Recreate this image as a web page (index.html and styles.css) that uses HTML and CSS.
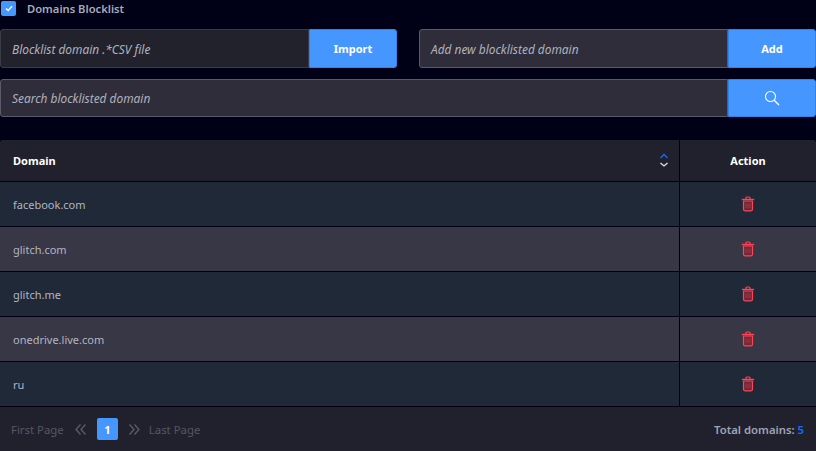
FILE: index.html
```html
<!DOCTYPE html>
<html lang="en">
<head>
<meta charset="utf-8">
<title>Domains Blocklist</title>
<link rel="stylesheet" href="styles.css">
</head>
<body>
<div class="page">
  <label class="title">
    <span class="check"><svg width="8" height="7" viewBox="0 0 8 7"><path d="M1 3.500 3.200 5.600 7 1.200" fill="none" stroke="#fff" stroke-width="1.400"/></svg></span>
    <span>Domains Blocklist</span>
  </label>
  <div class="row two">
    <div class="group">
      <div class="field dim">Blocklist domain .*CSV file</div>
      <button class="btn">Import</button>
    </div>
    <div class="group">
      <div class="field">Add new blocklisted domain</div>
      <button class="btn">Add</button>
    </div>
  </div>
  <div class="group search">
    <div class="field">Search blocklisted domain</div>
    <button class="btn">
      <svg width="16" height="16" viewBox="0 0 16 16" fill="none" stroke="#fff" stroke-width="1.100"><circle cx="6.500" cy="6.500" r="5"/><path d="M10.200 10.200 15 15" stroke-width="1.300"/></svg>
    </button>
  </div>
  <div class="table">
    <div class="thead">
      <div class="c-domain">Domain
        <svg class="sort" width="10" height="15" viewBox="0 0 10 15" fill="none" stroke-width="1.300"><path d="M1.500 5 5 1.500 8.500 5" stroke="#0d6efd"/><path d="M1.500 10 5 13 8.500 10" stroke="#e4e4e8"/></svg>
      </div>
      <div class="c-action">Action</div>
    </div>
    <div class="tr a"><div class="c-domain">facebook.com</div><div class="c-action"><svg class="trash" width="14" height="16" viewBox="0 0 14 16"><use href="#trash"/></svg></div></div>
    <div class="tr b"><div class="c-domain">glitch.com</div><div class="c-action"><svg class="trash" width="14" height="16" viewBox="0 0 14 16"><use href="#trash"/></svg></div></div>
    <div class="tr a"><div class="c-domain">glitch.me</div><div class="c-action"><svg class="trash" width="14" height="16" viewBox="0 0 14 16"><use href="#trash"/></svg></div></div>
    <div class="tr b"><div class="c-domain">onedrive.live.com</div><div class="c-action"><svg class="trash" width="14" height="16" viewBox="0 0 14 16"><use href="#trash"/></svg></div></div>
    <div class="tr a"><div class="c-domain">ru</div><div class="c-action"><svg class="trash" width="14" height="16" viewBox="0 0 14 16"><use href="#trash"/></svg></div></div>
    <div class="tfoot">
      <div class="pager">
        <span>First Page</span>
        <svg class="prev" width="12" height="11" viewBox="0 0 12 11" fill="none" stroke="#5a5c69" stroke-width="1.300"><path d="M5.500 .5 1 5.500 5.500 10.500M10.500 .5 6 5.500 10.500 10.500"/></svg>
        <span class="current">1</span>
        <svg class="next" width="12" height="11" viewBox="0 0 12 11" fill="none" stroke="#5a5c69" stroke-width="1.300"><path d="M1.500 .5 6 5.500 1.500 10.500M6.500 .5 11 5.500 6.500 10.500"/></svg>
        <span>Last Page</span>
      </div>
      <div class="total">Total domains: <b>5</b></div>
    </div>
  </div>
</div>
<svg class="defs" width="0" height="0" aria-hidden="true">
  <symbol id="trash" viewBox="0 0 14 16">
    <path d="M2.500 5h9v8.300a1.500 1.500 0 0 1-1.500 1.500H4a1.500 1.500 0 0 1-1.500-1.500z" fill="#6e2a3a" stroke="#ff4354" stroke-width="1.200"/>
    <path d="M.8 3.500h12.400" fill="none" stroke="#ff4354" stroke-width="1.400"/>
    <path d="M5 3.200V2a1 1 0 0 1 1-1h2a1 1 0 0 1 1 1v1.200" fill="none" stroke="#ff4354" stroke-width="1.200"/>
    <path d="M5 7.500v4.500M7 7.500v4.500M9 7.500v4.500" fill="none" stroke="#b03242" stroke-width=".9"/>
  </symbol>
</svg>
</body>
</html>
```

FILE: styles.css
```css
* { box-sizing: border-box; }
html, body { margin: 0; padding: 0; }
body {
  width: 816px;
  height: 451px;
  overflow: hidden;
  background: #000016;
  font-family: "Noto Sans", "Open Sans", sans-serif;
  font-size: 11px;
  color: #a9acba;
}
.page { display: flex; flex-direction: column; }
.title {
  display: flex;
  align-items: center;
  gap: 11px;
  height: 16px;
  padding-left: 1px;
  font-size: 11.2px;
  font-weight: 600;
  color: #a8abba;
}
.check {
  width: 15px;
  height: 15px;
  border-radius: 2px;
  background: #4596ff;
  display: flex;
  align-items: center;
  justify-content: center;
}
.row.two {
  display: flex;
  justify-content: space-between;
  margin-top: 13px;
}
.group { display: flex; height: 39px; width: 397px; }
.group.search { width: 816px; height: 38px; margin-top: 11px; }
.field {
  flex: 1;
  display: flex;
  align-items: center;
  padding-left: 11px;
  font-style: italic;
  font-size: 11.9px;
  color: #b0b2bf;
  background: #2e2d39;
  border: 1px solid #5a5a68;
  border-radius: 3px 0 0 3px;
}
.field.dim { background: #22222d; border-color: #3b3b48; }
.btn {
  width: 88px;
  padding: 0;
  border: 1px solid #2f84e6;
  border-radius: 0 3px 3px 0;
  background: #4596ff;
  color: #fff;
  font-family: inherit;
  font-size: 11px;
  font-weight: 700;
  display: flex;
  align-items: center;
  justify-content: center;
}
.table { margin-top: 23px; }
.thead, .tr { display: flex; border-bottom: 1px solid #000016; }
.thead {
  height: 42px;
  background: #21212e;
  color: #fff;
  font-weight: 700;
  border-radius: 3px 3px 0 0;
}
.tr { height: 45px; color: #b2b5c2; }
.tr.a { background: #1f2937; }
.tr.b { background: #383745; }
.c-domain {
  width: 680px;
  display: flex;
  align-items: center;
  justify-content: space-between;
  padding: 0 11px 0 13px;
  border-right: 1px solid #000016;
}
.thead .c-domain { padding-right: 10px; }
.c-action {
  flex: 1;
  display: flex;
  align-items: center;
  justify-content: center;
}
.trash { margin-top: -1px; }
.tfoot {
  height: 44px;
  background: #21212e;
  display: flex;
  align-items: center;
  justify-content: space-between;
  padding: 0 12px 0 11px;
}
.pager { display: flex; align-items: center; font-size: 11.4px; color: #555764; }
.prev { margin: 0 10px 0 11px; }
.next { margin: 0 9px 0 10px; }
.current {
  width: 21px;
  height: 22px;
  border-radius: 2px;
  background: #4596ff;
  color: #fff;
  font-size: 11px;
  font-weight: 700;
  display: flex;
  align-items: center;
  justify-content: center;
}
.total { font-size: 11.3px; font-weight: 600; color: #a0a3b4; }
.total b { color: #0d6efd; font-weight: 600; }
.defs { position: absolute; }
```
